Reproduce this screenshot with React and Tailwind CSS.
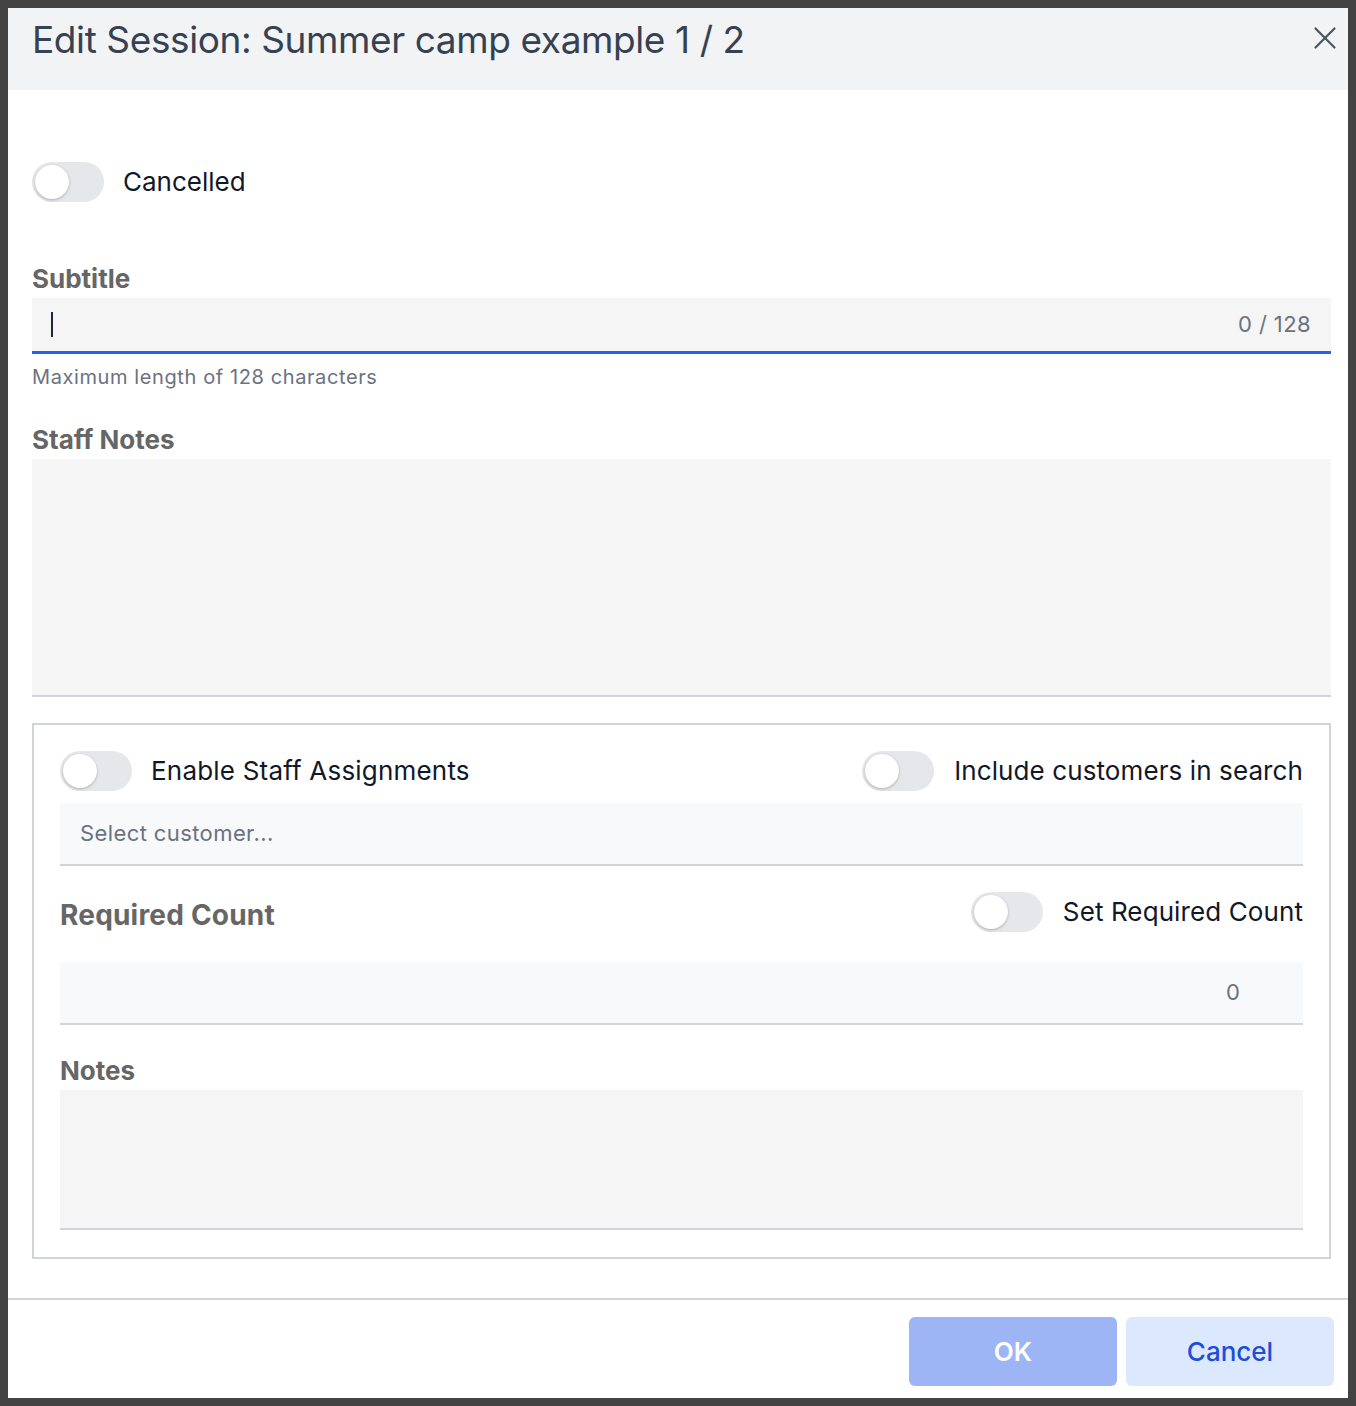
import { X } from 'lucide-react';

const font = { fontFamily: 'Inter, "Noto Sans", sans-serif' };

function Toggle() {
  return (
    <div className="relative w-[72px] h-[40px] shrink-0 rounded-full bg-[#e5e7eb]">
      <span className="absolute left-[3px] top-[3px] w-[34px] h-[34px] rounded-full bg-white shadow-[0_1px_3px_rgba(0,0,0,0.25)]" />
    </div>
  );
}

function Label({ children, className = '' }) {
  return (
    <div className={`text-[26px] leading-[32px] font-bold text-[#666666] ${className}`}>
      {children}
    </div>
  );
}

export default function App() {
  return (
    <div className="w-[1356px] h-[1406px] bg-[#434343] p-2" style={font}>
      <div className="h-full bg-white flex flex-col">
        {/* Header */}
        <div className="h-[82px] bg-[#f2f3f5] flex items-start justify-between pl-6 pr-[4px] pt-[10px] shrink-0">
          <h1 className="text-[37px] leading-[44px] tracking-[-0.4px] text-[#364152]">
            Edit Session: Summer camp example 1 / 2
          </h1>
          <X className="w-[38px] h-[38px] mt-[1px] text-[#4b5563]" strokeWidth={1.4} />
        </div>

        {/* Body */}
        <div className="flex-1 pl-6 pr-[17px]">
          <div className="mt-[72px] flex items-center gap-[19px]">
            <Toggle />
            <span className="text-[26px] leading-[32px] text-[#111827]">Cancelled</span>
          </div>

          <Label className="mt-[61px]">Subtitle</Label>
          <div className="mt-[3px] h-[56px] bg-[#f5f5f5] border-b-[3px] border-[#2563eb] flex items-center justify-between pl-[19px] pr-[20px]">
            <span className="w-[2px] h-[25px] bg-[#1f2937]" />
            <span className="text-[22px] tracking-[0.4px] text-[#6b7280]">0 / 128</span>
          </div>
          <div className="mt-[11px] text-[20px] leading-[24px] text-[#6b7280] tracking-[0.6px]">
            Maximum length of 128 characters
          </div>

          <Label className="mt-[35px]">Staff Notes</Label>
          <div className="mt-[3px] h-[238px] bg-[#f6f6f6] border-b-2 border-[#d1d5db]" />

          {/* Staff box */}
          <div className="mt-[26px] border-2 border-[#d1d5db] px-[26px] pt-[26px] pb-[27px]">
            <div className="flex items-center justify-between">
              <div className="flex items-center gap-[19px]">
                <Toggle />
                <span className="text-[26px] leading-[32px] tracking-[0.2px] text-[#111827]">Enable Staff Assignments</span>
              </div>
              <div className="flex items-center gap-[20px]">
                <Toggle />
                <span className="text-[26px] leading-[32px] tracking-[0.1px] text-[#111827]">Include customers in search</span>
              </div>
            </div>

            <div className="mt-[12px] h-[63px] bg-[#f8f9fa] border-b-2 border-[#d1d5db] flex items-center pl-[20px]">
              <span className="text-[22px] text-[#6b7280] tracking-[0.4px]">Select customer...</span>
            </div>

            <div className="mt-[26px] flex items-center justify-between">
              <Label className="text-[28px] tracking-[0.2px] mt-[6px]">Required Count</Label>
              <div className="flex items-center gap-[20px]">
                <Toggle />
                <span className="text-[26px] leading-[32px] tracking-[0.1px] text-[#111827]">Set Required Count</span>
              </div>
            </div>

            <div className="mt-[30px] h-[63px] bg-[#f8f9fa] border-b-2 border-[#d1d5db] flex items-center justify-end pr-[63px]">
              <span className="text-[22px] text-[#6b7280]">0</span>
            </div>

            <Label className="mt-[30px]">Notes</Label>
            <div className="mt-[3px] h-[140px] bg-[#f5f5f5] border-b-2 border-[#d1d5db]" />
          </div>
        </div>

        {/* Footer */}
        <div className="h-[100px] shrink-0 border-t-2 border-[#d1d5db] flex items-start justify-end gap-[9px] pt-[17px] pr-[14px]">
          <button className="w-[208px] h-[69px] rounded-[6px] bg-[#9db5f5] text-white text-[26px] font-semibold">
            OK
          </button>
          <button className="w-[208px] h-[69px] rounded-[6px] bg-[#dbe8fe] text-[#1d4ed8] text-[26px] font-medium">
            Cancel
          </button>
        </div>
      </div>
    </div>
  );
}
